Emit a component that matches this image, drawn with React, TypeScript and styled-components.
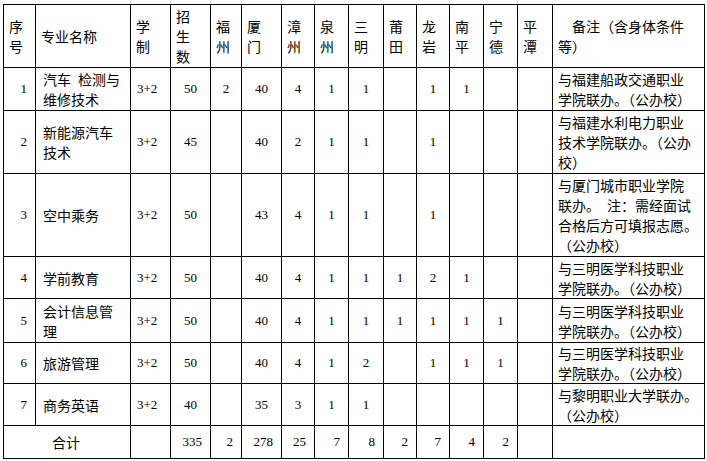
import React from 'react';
import styled, { createGlobalStyle } from 'styled-components';

const GlobalStyle = createGlobalStyle`
  html, body { margin: 0; padding: 0; background: #ffffff; }
  body { font-family: "Noto Sans CJK SC", sans-serif; color: #000000; }
`;

const Page = styled.div`
  position: relative;
  width: 707px;
  height: 461px;
  box-sizing: border-box;
  padding: 4px 0 0 3px;
  background: #ffffff;
`;

const Grid = styled.div`
  display: grid;
  width: 702px;
  box-sizing: border-box;
  grid-template-columns: 31px 94px 39px 39px 30px 39px 32px 33px 34px 32px 32px 33px 33px 34px 151px;
  grid-template-rows: 62px 42px 62px 82px 41px 43px 40px 41px 32px;
  gap: 1px;
  padding: 1px;
  background: #000000;
`;

const Cell = styled.div<{ $span?: number }>`
  background: #ffffff;
  display: flex;
  align-items: center;
  box-sizing: border-box;
  grid-column: span ${(p) => p.$span ?? 1};
  font-family: "Noto Sans CJK SC", sans-serif;
  font-size: 14px;
  line-height: 20px;
  white-space: nowrap;
  overflow: visible;
  color: #000000;
`;

const Lines = styled.span`
  display: block;
`;

const Line = styled.span`
  display: block;
`;

const HeadCell = styled(Cell)`
  justify-content: flex-start;
  padding-left: 5px;
`;

const IndexCell = styled(Cell)`
  justify-content: flex-end;
  padding-right: 8px;
  font-family: "Liberation Serif", serif;
  font-size: 13px;
`;

const NameCell = styled(Cell)`
  justify-content: flex-start;
  padding-left: 7px;
`;

const PlanCell = styled(Cell)`
  justify-content: flex-start;
  padding-left: 6px;
  font-family: "Liberation Serif", serif;
  font-size: 13px;
`;

const NumCell = styled(Cell)`
  justify-content: center;
  font-family: "Liberation Serif", serif;
  font-size: 13px;
`;

const NoteCell = styled(Cell)`
  justify-content: flex-start;
  padding-left: 5px;
`;

const TotalLabel = styled(Cell)`
  justify-content: center;
  padding-right: 2px;
`;

const TotalNum = styled(Cell)`
  justify-content: flex-end;
  padding-right: 8px;
  font-family: "Liberation Serif", serif;
  font-size: 13px;
`;

const Multi: React.FC<{ lines: string[] }> = ({ lines }) => (
  <Lines>
    {lines.map((l, i) => (
      <Line key={i}>{l}</Line>
    ))}
  </Lines>
);

const headers: string[][] = [
  ['序', '号'],
  ['专业名称'],
  ['学', '制'],
  ['招', '生', '数'],
  ['福', '州'],
  ['厦', '门'],
  ['漳', '州'],
  ['泉', '州'],
  ['三', '明'],
  ['莆', '田'],
  ['龙', '岩'],
  ['南', '平'],
  ['宁', '德'],
  ['平', '潭'],
];

type Row = {
  no: string;
  name: string[];
  plan: string;
  total: string;
  cities: string[];
  note: string[];
};

const rows: Row[] = [
  {
    no: '1',
    name: ['汽车\u2002检测与', '维修技术'],
    plan: '3+2',
    total: '50',
    cities: ['2', '40', '4', '1', '1', '', '1', '1', '', ''],
    note: ['与福建船政交通职业', '学院联办。（公办校）'],
  },
  {
    no: '2',
    name: ['新能源汽车', '技术'],
    plan: '3+2',
    total: '45',
    cities: ['', '40', '2', '1', '1', '', '1', '', '', ''],
    note: ['与福建水利电力职业', '技术学院联办。（公办', '校）'],
  },
  {
    no: '3',
    name: ['空中乘务'],
    plan: '3+2',
    total: '50',
    cities: ['', '43', '4', '1', '1', '', '1', '', '', ''],
    note: ['与厦门城市职业学院', '联办。\u2002注：需经面试', '合格后方可填报志愿。', '（公办校）'],
  },
  {
    no: '4',
    name: ['学前教育'],
    plan: '3+2',
    total: '50',
    cities: ['', '40', '4', '1', '1', '1', '2', '1', '', ''],
    note: ['与三明医学科技职业', '学院联办。（公办校）'],
  },
  {
    no: '5',
    name: ['会计信息管', '理'],
    plan: '3+2',
    total: '50',
    cities: ['', '40', '4', '1', '1', '1', '1', '1', '1', ''],
    note: ['与三明医学科技职业', '学院联办。（公办校）'],
  },
  {
    no: '6',
    name: ['旅游管理'],
    plan: '3+2',
    total: '50',
    cities: ['', '40', '4', '1', '2', '', '1', '1', '1', ''],
    note: ['与三明医学科技职业', '学院联办。（公办校）'],
  },
  {
    no: '7',
    name: ['商务英语'],
    plan: '3+2',
    total: '40',
    cities: ['', '35', '3', '1', '1', '', '', '', '', ''],
    note: ['与黎明职业大学联办。', '（公办校）'],
  },
];

const totals = ['335', '2', '278', '25', '7', '8', '2', '7', '4', '2', ''];

export default function App() {
  return (
    <>
      <GlobalStyle />
      <Page>
        <Grid>
          {headers.map((h, i) => (
            <HeadCell key={`h${i}`}>
              <Multi lines={h} />
            </HeadCell>
          ))}
          <HeadCell>
            <Multi lines={['\u3000备注（含身体条件', '等）']} />
          </HeadCell>

          {rows.map((r) => (
            <React.Fragment key={r.no}>
              <IndexCell>{r.no}</IndexCell>
              <NameCell>
                <Multi lines={r.name} />
              </NameCell>
              <PlanCell>{r.plan}</PlanCell>
              <NumCell>{r.total}</NumCell>
              {r.cities.map((c, j) => (
                <NumCell key={j}>{c}</NumCell>
              ))}
              <NoteCell>
                <Multi lines={r.note} />
              </NoteCell>
            </React.Fragment>
          ))}

          <TotalLabel $span={2}>合计</TotalLabel>
          <TotalNum />
          {totals.map((t, i) => (
            <TotalNum key={`t${i}`}>{t}</TotalNum>
          ))}
          <TotalNum />
        </Grid>
      </Page>
    </>
  );
}
